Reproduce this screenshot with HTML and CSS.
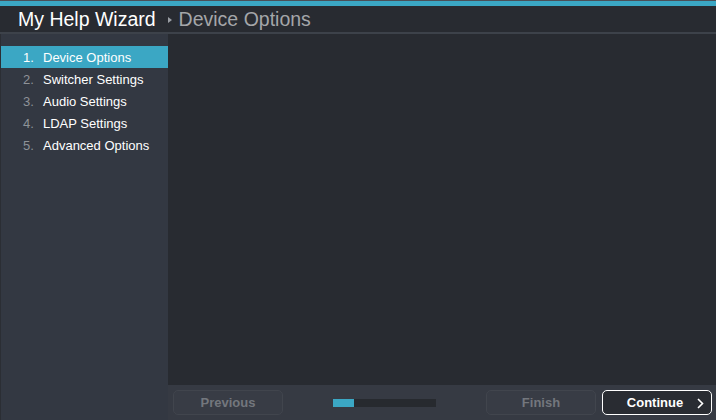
FILE: index.html
```html
<!DOCTYPE html>
<html>
<head>
<meta charset="utf-8">
<link rel="stylesheet" href="styles.css">
</head>
<body>
<div class="app">
  <div class="topline"></div>
  <div class="accent"></div>
  <header class="header">
    <span class="title">My Help Wizard</span>
    <span class="crumb-arrow"></span>
    <span class="crumb">Device Options</span>
  </header>
  <div class="sep"></div>
  <div class="body">
    <nav class="sidebar">
      <div class="item active"><span class="num">1.</span><span class="label">Device Options</span></div>
      <div class="item"><span class="num">2.</span><span class="label">Switcher Settings</span></div>
      <div class="item"><span class="num">3.</span><span class="label">Audio Settings</span></div>
      <div class="item"><span class="num">4.</span><span class="label">LDAP Settings</span></div>
      <div class="item"><span class="num">5.</span><span class="label">Advanced Options</span></div>
    </nav>
    <main class="main">
      <div class="content"></div>
      <footer class="footer">
        <button class="btn disabled">Previous</button>
        <div class="progress"><div class="progress-fill" style="width:21px"></div></div>
        <button class="btn disabled finish">Finish</button>
        <button class="btn primary">Continue
          <svg class="chev" width="7" height="11" viewBox="0 0 7 11"><path d="M1 1 L5.5 5.5 L1 10" fill="none" stroke="#ffffff" stroke-width="1.6"/></svg>
        </button>
      </footer>
    </main>
  </div>
</div>
</body>
</html>
```
FILE: styles.css
```css
html, body {
  margin: 0;
  padding: 0;
  background: #282b31;
  font-family: "Liberation Sans", Arial, sans-serif;
}
.app {
  width: 716px;
  height: 420px;
  display: flex;
  flex-direction: column;
  overflow: hidden;
}
.topline {
  height: 1px;
  background: #4b5058;
}
.accent {
  height: 5px;
  background: #3ba7c4;
}
.header {
  height: 26px;
  display: flex;
  align-items: center;
  padding-left: 18px;
  background: #282b31;
  box-sizing: border-box;
}
.title {
  color: #ffffff;
  font-size: 19.5px;
  line-height: 26px;
}
.crumb-arrow {
  width: 0;
  height: 0;
  border-top: 3.5px solid transparent;
  border-bottom: 3.5px solid transparent;
  border-left: 4px solid #9a9ea4;
  margin-left: 12px;
  margin-right: 7px;
  margin-top: 1px;
}
.crumb {
  color: #a4a6a9;
  font-size: 19.5px;
  line-height: 26px;
}
.sep {
  height: 2px;
  background: #3d424a;
}
.body {
  flex: 1;
  display: flex;
  min-height: 0;
}
.sidebar {
  flex: none;
  width: 168px;
  box-sizing: border-box;
  background: #333842;
  border-left: 1px solid #2b2e34;
  padding-top: 12px;
}
.item {
  height: 22px;
  display: flex;
  align-items: center;
  font-size: 13px;
  color: #ffffff;
}
.item .num {
  width: 20px;
  padding-left: 22px;
  color: #8e9298;
}
.item.active {
  background: #3ba7c4;
}
.item.active .num {
  color: #ffffff;
}
.main {
  flex: 1;
  display: flex;
  flex-direction: column;
  min-width: 0;
}
.content {
  flex: 1;
  background: #282b31;
}
.footer {
  height: 35px;
  background: #363a43;
  display: flex;
  align-items: center;
  padding: 0 5px;
  box-sizing: border-box;
}
.btn {
  flex: none;
  width: 110px;
  height: 25px;
  box-sizing: border-box;
  border-radius: 5px;
  font-family: "Liberation Sans", Arial, sans-serif;
  font-weight: bold;
  font-size: 13px;
  padding: 0;
  display: flex;
  align-items: center;
  justify-content: center;
  position: relative;
}
.btn.disabled {
  background: #383c45;
  border: 1px solid #41454d;
  color: #73777d;
}
.progress {
  flex: none;
  width: 103px;
  height: 8px;
  background: #272a2f;
  margin-left: 50px;
}
.progress-fill {
  height: 100%;
  background: #3ba7c4;
}
.finish {
  margin-left: 50px;
}
.btn.primary {
  margin-left: 6px;
  background: #292c32;
  border: 1px solid #ffffff;
  color: #ffffff;
  padding-right: 4px;
}
.chev {
  position: absolute;
  right: 7px;
  top: 7px;
}
```
